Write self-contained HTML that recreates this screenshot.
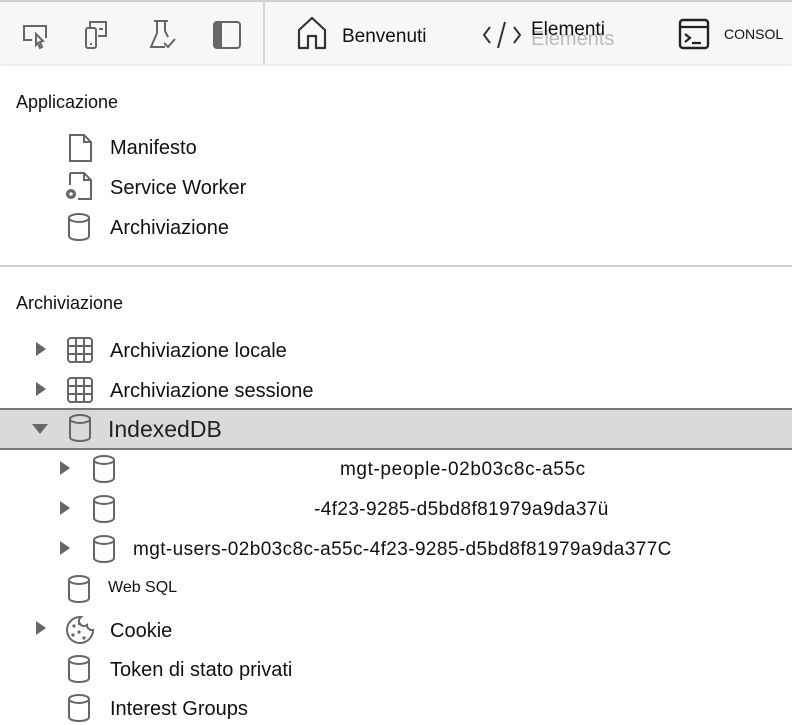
<!DOCTYPE html>
<html><head><meta charset="utf-8"><style>
body{margin:0;width:792px;height:704px;overflow:hidden;background:#fff;font-family:"Liberation Sans",Arial,sans-serif;color:#111;position:relative}
.tb{position:absolute;left:0;top:0;width:792px;height:64px;background:#f7f7f7;border-top:2px solid #cfcfcf;box-sizing:border-box;box-shadow:0 1px 3px rgba(0,0,0,.12)}
.t{position:absolute;white-space:nowrap}
.m{font-size:20px}
svg{position:absolute;overflow:visible}
.i{fill:none;stroke:#666;stroke-width:2}
</style></head><body>
<div class="tb"></div>
<div style="position:absolute;left:263px;top:2px;width:2px;height:62px;background:#d4d4d4"></div>
<svg style="left:18px;top:20px" width="34" height="34"><path class="i" d="M6 18V6h22v12M6 18v2h8" /><path class="i" d="M18 14l7 7-3 1 2 5-2 1-2-5-2 2z"/></svg>
<svg style="left:82px;top:19px" width="36" height="36"><rect class="i" x="4" y="9" width="10" height="20" rx="2"/><path class="i" d="M8 9V3h16v14h-8M17 10h4"/><path class="i" d="M8 25h2"/></svg>
<svg style="left:148px;top:18px" width="36" height="36"><path class="i" d="M6 3h14M9 3v12l-6 14h14M17 3v10l3 6"/><path class="i" d="M16 25l4 4 7-8"/></svg>
<svg style="left:212px;top:20px" width="32" height="32"><rect class="i" x="2" y="2" width="26" height="26" rx="3"/><rect x="2" y="2" width="8" height="26" fill="#666"/></svg>
<svg style="left:296px;top:16px" width="36" height="36"><path d="M3 32V14L16 2l13 12v18h-9V20h-8v12z" fill="none" stroke="#333" stroke-width="2.2" stroke-linejoin="round"/></svg>
<div class="t" style="left:342px;top:26px;font-size:19px;color:#111">Benvenuti</div>
<svg style="left:482px;top:20px" width="40" height="30"><path d="M8 7L2 15l6 8M32 7l6 8-6 8M23 2l-7 26" fill="none" stroke="#333" stroke-width="2"/></svg>
<div class="t" style="left:531px;top:28px;font-size:20px;color:#bbb">Elements</div>
<div class="t" style="left:531px;top:19px;font-size:19px;color:#111">Elementi</div>
<svg style="left:678px;top:18px" width="34" height="34"><rect x="2" y="2" width="28" height="28" rx="3" fill="none" stroke="#222" stroke-width="2.4"/><path d="M2 9h28M7 16l5 4-5 4M14 25h9" fill="none" stroke="#222" stroke-width="2.2"/></svg>
<div class="t" style="left:724px;top:26px;font-size:14px;color:#111">CONSOL</div>

<div class="t" style="left:16px;top:92px;font-size:18px">Applicazione</div>
<svg style="left:68px;top:133px" width="26" height="30"><path class="i" d="M2 2h14l7 7v19H2z M16 2v7h7"/></svg>
<div class="t m" style="left:110px;top:137px">Manifesto</div>
<svg style="left:62px;top:171px" width="32" height="34"><path class="i" d="M8 2h14l7 7v19H16 M8 2v12 M22 2v7h7"/><circle cx="9" cy="23" r="5" fill="#666"/><circle cx="9" cy="23" r="1.8" fill="#fff"/></svg>
<div class="t m" style="left:110px;top:177px">Service Worker</div>
<div class="t m" style="left:110px;top:217px">Archiviazione</div>
<div style="position:absolute;left:0;top:265px;width:792px;height:2px;background:#d0d0d0"></div>
<div class="t" style="left:16px;top:293px;font-size:18px">Archiviazione</div>

<div style="position:absolute;left:0;top:408px;width:792px;height:38px;background:#dadada;border-top:2px solid #777;border-bottom:2px solid #777"></div>

<svg width="0" height="0"><defs><g id="cyl"><ellipse cx="12" cy="6" rx="10" ry="4" fill="none" stroke="#666" stroke-width="2"/><path d="M2 6v18c0 2.5 4.5 4 10 4s10-1.5 10-4V6" fill="none" stroke="#666" stroke-width="2"/></g>
<g id="grid"><rect x="2" y="2" width="24" height="24" rx="3" fill="none" stroke="#666" stroke-width="2"/><path d="M10 2v24M18 2v24M2 10h24M2 18h24" stroke="#666" stroke-width="2"/></g>
<path id="tr" d="M0 0l10 7-10 7z" fill="#666"/><path id="td" d="M0 0h16l-8 10z" fill="#666"/></defs></svg>
<svg style="left:67px;top:212px" width="26" height="32"><use href="#cyl"/></svg>

<svg style="left:36px;top:342px" width="12" height="16"><use href="#tr"/></svg>
<svg style="left:66px;top:336px" width="28" height="28"><use href="#grid"/></svg>
<div class="t m" style="left:110px;top:340px">Archiviazione locale</div>
<svg style="left:36px;top:382px" width="12" height="16"><use href="#tr"/></svg>
<svg style="left:66px;top:376px" width="28" height="28"><use href="#grid"/></svg>
<div class="t m" style="left:110px;top:380px">Archiviazione sessione</div>

<svg style="left:32px;top:424px" width="16" height="12"><use href="#td"/></svg>
<svg style="left:68px;top:413px" width="26" height="32"><use href="#cyl"/></svg>
<div class="t" style="left:108px;top:416px;font-size:23px;color:#222">IndexedDB</div>

<svg style="left:60px;top:461px" width="12" height="16"><use href="#tr"/></svg>
<svg style="left:92px;top:454px" width="26" height="32"><use href="#cyl"/></svg>
<div class="t" style="left:340px;top:459px;font-size:19px;letter-spacing:0.6px">mgt-people-02b03c8c-a55c</div>
<svg style="left:60px;top:501px" width="12" height="16"><use href="#tr"/></svg>
<svg style="left:92px;top:494px" width="26" height="32"><use href="#cyl"/></svg>
<div class="t" style="left:314px;top:499px;font-size:19px;letter-spacing:0.4px">-4f23-9285-d5bd8f81979a9da37ü</div>
<svg style="left:60px;top:541px" width="12" height="16"><use href="#tr"/></svg>
<svg style="left:92px;top:534px" width="26" height="32"><use href="#cyl"/></svg>
<div class="t" style="left:133px;top:539px;font-size:19px;letter-spacing:0.4px">mgt-users-02b03c8c-a55c-4f23-9285-d5bd8f81979a9da377C</div>

<svg style="left:67px;top:574px" width="26" height="32"><use href="#cyl"/></svg>
<div class="t" style="left:108px;top:579px;font-size:16px">Web SQL</div>
<svg style="left:36px;top:621px" width="12" height="16"><use href="#tr"/></svg>
<svg style="left:64px;top:614px" width="32" height="32"><path d="M17 3a13 13 0 1 0 12 13 5 5 0 0 1-6-5 5 5 0 0 1-6-8z" fill="none" stroke="#666" stroke-width="2"/><circle cx="10" cy="12" r="1.6" fill="#666"/><circle cx="15" cy="18" r="1.6" fill="#666"/><circle cx="9" cy="21" r="1.6" fill="#666"/><circle cx="20" cy="24" r="1.6" fill="#666"/><circle cx="15" cy="10" r="1.2" fill="#666"/></svg>
<div class="t m" style="left:110px;top:620px">Cookie</div>
<svg style="left:67px;top:654px" width="26" height="32"><use href="#cyl"/></svg>
<div class="t m" style="left:110px;top:659px">Token di stato privati</div>
<svg style="left:67px;top:693px" width="26" height="32"><use href="#cyl"/></svg>
<div class="t m" style="left:110px;top:698px">Interest Groups</div>
</body></html>
